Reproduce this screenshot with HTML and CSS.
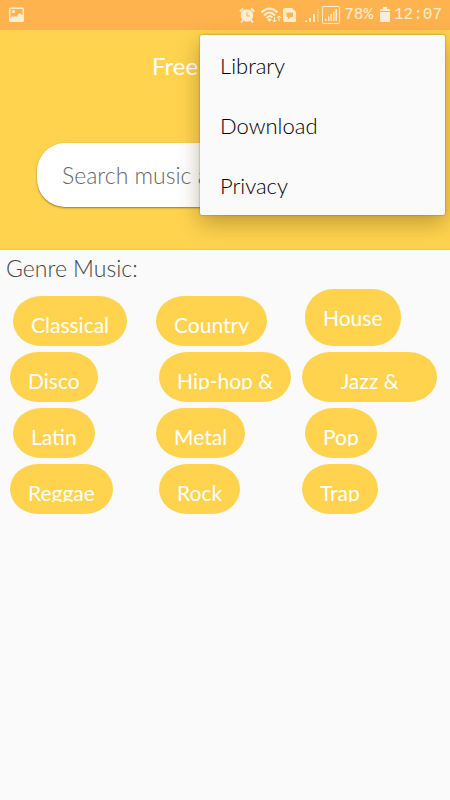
FILE: index.html
```html
<!DOCTYPE html>
<html lang="en">
<head>
<meta charset="utf-8">
<meta name="viewport" content="width=device-width, initial-scale=1">
<title>Free Music</title>
<link rel="stylesheet" href="styles.css">
</head>
<body>
<div class="status">
  <svg class="picture" width="16" height="16" viewBox="0 0 16 16" aria-hidden="true"><path fill-rule="evenodd" d="M1.500 .5h12a1.500 1.500 0 0 1 1.500 1.500v11.500a1.500 1.500 0 0 1-1.500 1.500h-12A1.500 1.500 0 0 1 0 13.500V2A1.500 1.500 0 0 1 1.500.5zM1.500 2v9l2-2 1.500 1 1-1 1.500 1 3-4 1 1 2 1V2zM4.500 3a1.600 1.600 0 1 1 0 3.200 1.600 1.600 0 0 1 0-3.200z"/></svg>
  <svg class="alarm" width="16" height="16" viewBox="0 0 16 16" aria-hidden="true"><circle cx="8" cy="8.500" r="6.200"/><path class="line" d="M1 4.500 4 1.500M12 1.500l3 3M4 13l-2 2.500M12 13l2 2.500"/><path class="cut" d="M8 5v4h3"/></svg>
  <svg class="wifi" width="20" height="16" viewBox="0 0 20 16" aria-hidden="true"><path class="line" d="M.5 5.500Q8.500-2.500 16.500 5.500M3 8.500Q8.500 2.500 14 8.500M5.500 11Q8.500 7.500 11.500 10.500"/><path d="M6.500 12.500 8.500 11 10.500 12.500 8.500 15z"/><path class="thin" d="M13.500 10v5M11.500 13l2 2 2-2M18 14V9M16 11l2-2 2 2"/></svg>
  <svg class="sim" width="14" height="16" viewBox="0 0 14 16" aria-hidden="true"><path fill-rule="evenodd" d="M2 1h7l4 4v9a1 1 0 0 1-1 1H2a2 2 0 0 1-2-2V3a2 2 0 0 1 2-2zm1.500 4.500V10H5v2.500L7.500 10H10V5.500z"/></svg>
  <svg class="signal" width="16" height="16" viewBox="0 0 16 16" aria-hidden="true"><path d="M0 13.500h2V15H0zM4 11h2v4H4zM8 7h2v8H8z"/><path class="faint" d="M12 2h2v13h-2z"/></svg>
  <svg class="signal-box" width="18" height="18" viewBox="0 0 18 18" aria-hidden="true"><rect class="thin" x=".5" y=".5" width="17" height="17" rx="1"/><path d="M3 13h1.500v2H3zM6 10.500h1.500V15H6zM8.500 8H10v7H8.500zM11 5.500h1.500V15H11zM13.500 3H15v12h-1.500z"/></svg>
  <span class="percent">78%</span>
  <svg class="battery" width="10" height="16" viewBox="0 0 10 16" aria-hidden="true"><path d="M3 0h4v2h2a1 1 0 0 1 1 1v1H0V3a1 1 0 0 1 1-1h2zM0 5h10v9a1 1 0 0 1-1 1H1a1 1 0 0 1-1-1z"/></svg>
  <time>12:07</time>
</div>
<header class="hero">
  <h1>Free</h1>
  <input class="search" type="search" aria-label="Search music" placeholder="Search music artist">
  <nav class="menu" aria-label="Options">
    <a href="#library">Library</a>
    <a href="#download">Download</a>
    <a href="#privacy">Privacy</a>
  </nav>
</header>
<main>
  <h2>Genre Music:</h2>
  <div class="genres">
    <button type="button" class="inset"><span>Classical</span></button>
    <button type="button"><span>Country</span></button>
    <button type="button" class="inset tall"><span>House</span></button>
    <button type="button"><span>Disco</span></button>
    <button type="button" class="inset"><span>Hip-hop &amp;</span></button>
    <button type="button" class="wide"><span>Jazz &amp;</span></button>
    <button type="button" class="inset"><span>Latin</span></button>
    <button type="button"><span>Metal</span></button>
    <button type="button" class="inset"><span>Pop</span></button>
    <button type="button"><span>Reggae</span></button>
    <button type="button" class="inset"><span>Rock</span></button>
    <button type="button"><span>Trap</span></button>
  </div>
</main>
</body>
</html>
```
FILE: styles.css
```css
* { box-sizing: border-box; }

body {
  margin: 0;
  min-height: 100vh;
  background: #fafafa;
  font-family: Lato, "Open Sans", sans-serif;
  font-weight: 300;
}

.status {
  display: flex;
  align-items: center;
  height: 30px;
  padding: 0 8px 0 9px;
  background: #ffb34e;
  color: #ffedd0;
  font: 16px/30px "Liberation Mono", monospace;
}
.status svg { flex: none; fill: #ffedd0; }
.status .line { fill: none; stroke: #ffedd0; stroke-width: 2; }
.status .thin { fill: none; stroke: #ffedd0; stroke-width: 1; }
.status .cut { fill: none; stroke: #ffb34e; stroke-width: 1; }
.status .faint { opacity: .3; }
.picture { margin-right: auto; }
.wifi { margin-left: 6px; }
.sim { margin-left: 2px; }
.signal { margin-left: 8px; }
.signal-box { margin-left: 1px; }
.percent { margin-left: 4px; }
.battery { margin: 0 4px 0 7px; }

.hero {
  position: relative;
  padding: 20px 37px 42px;
  background: #ffd34e;
  border-bottom: 1px solid #ffca10;
}
.hero h1 {
  margin: 0 0 61px;
  padding-left: 115px;
  color: #fff;
  font-size: 24px;
  font-weight: 400;
  line-height: 32px;
}
.search {
  display: block;
  width: 100%;
  height: 64px;
  padding: 0 25px;
  border: 0;
  border-radius: 28px;
  background: #fff;
  box-shadow: 0 1px 2px rgba(80, 60, 0, .6);
  color: #444;
  font: inherit;
  font-size: 23px;
  appearance: none;
}
.search::placeholder { color: #666; opacity: 1; }

.menu {
  position: absolute;
  top: 5px;
  right: 5px;
  width: 245px;
  border-radius: 2px;
  background: #fafafa;
  box-shadow: 0 8px 22px rgba(70, 50, 0, .35), 0 0 2px rgba(90, 70, 0, .6);
}
.menu a {
  display: block;
  height: 60px;
  padding: 0 20px;
  color: #000;
  font-size: 22px;
  line-height: 62px;
  text-decoration: none;
}

h2 {
  margin: 0 0 3px;
  padding: 0 6px;
  color: #444;
  font-size: 23px;
  font-weight: 300;
  line-height: 36px;
}
.genres {
  display: grid;
  grid-template-columns: repeat(3, 1fr);
  row-gap: 6px;
  padding: 0 2px 0 10px;
}
.genres button {
  align-self: end;
  justify-self: start;
  height: 50px;
  padding: 0 18px;
  border: 0;
  border-radius: 28px / 25px;
  background: #ffd34e;
  color: #fff;
  font: inherit;
  font-size: 21px;
  font-weight: 400;
  text-align: center;
  white-space: nowrap;
}
.genres .inset { margin-left: 3px; }
.genres .tall { height: 57px; border-radius: 28px; }
.genres .wide { min-width: 135px; }
.genres span {
  display: block;
  height: 26px;
  overflow: hidden;
  line-height: 34px;
}
.genres .tall span { height: auto; }
```
